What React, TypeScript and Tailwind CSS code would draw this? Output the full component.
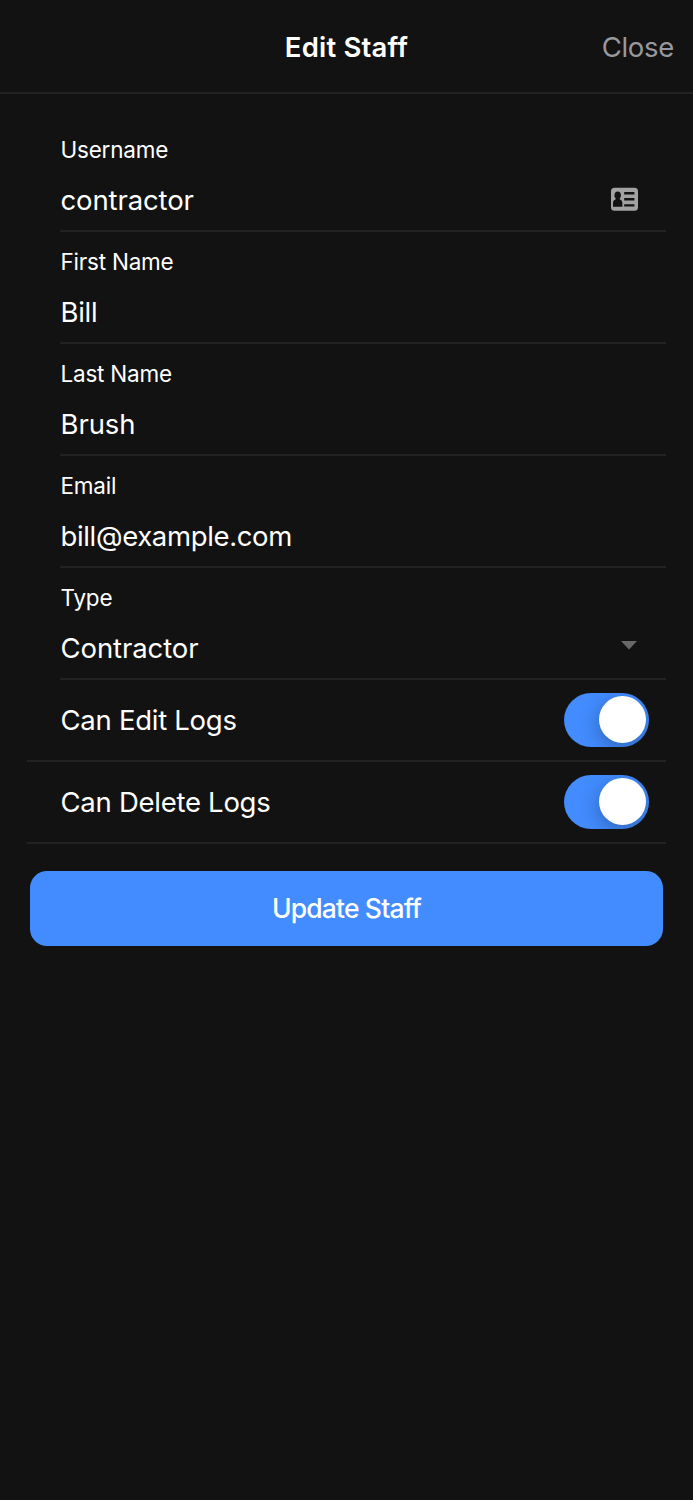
import React from "react";

const fields = [
  { label: "Username", value: "contractor", icon: "card", tracking: "tracking-[-0.12px]" },
  { label: "First Name", value: "Bill", tracking: "tracking-[-0.3px]" },
  { label: "Last Name", value: "Brush", tracking: "tracking-[-0.1px]" },
  { label: "Email", value: "bill@example.com", tracking: "tracking-[-0.35px]" },
  { label: "Type", value: "Contractor", icon: "caret", tracking: "tracking-[-0.1px]" },
];

function CardIcon() {
  return (
    <svg width="28" height="24" viewBox="0 0 28 24" className="mr-[27px] mb-[19px]">
      <rect x="0" y="0.700" width="27" height="23" rx="3.5" fill="#a2a2a2" />
      <ellipse cx="6.700" cy="8.300" rx="3.200" ry="3.800" fill="#121212" />
      <path d="M4.700 10h4v2.300c1.900.8 2.700 2.100 2.700 4v3.400H2v-3.400c0-1.900.8-3.200 2.700-4z" fill="#121212" />
      <path d="M13.200 5h10.200v2.400H13.200zM13.200 11h10.200v2.400H13.200zM13.200 17.200h10.200v2.400H13.200z" fill="#121212" />
    </svg>
  );
}

function Toggle() {
  return (
    <div className="mr-[17px] flex h-[53.5px] w-[85px] items-start justify-end overflow-hidden rounded-full bg-[#428cff] pt-[3px] pr-[3px]">
      <div className="size-[47px] rounded-full bg-white shadow-[0_5px_20px_rgba(0,0,0,0.3)]" />
    </div>
  );
}

export default function App() {
  return (
    <div className="min-h-[1500px] w-[693px] bg-[#121212] font-['Inter',sans-serif] text-white">
      <header className="grid h-[94px] grid-cols-[1fr_auto_1fr] items-center border-b-2 border-[#222222] px-[19px] pt-[3px] text-[27.5px]">
        <span />
        <h1 className="text-[27.5px] font-semibold tracking-[0.2px]">Edit Staff</h1>
        <button className="justify-self-end tracking-[-0.3px] text-[#98989f]">Close</button>
      </header>
      <main className="pt-[26px]">
        {fields.map((f) => (
          <div key={f.label} className="mr-[27px] ml-[60px] flex h-[112px] items-end justify-between border-b-2 border-[#222222]">
            <div className="self-start pt-[14px] pl-[0.5px]">
              <div className="text-[22.5px] leading-8 tracking-[-0.22px]">{f.label}</div>
              <div className={`mt-[16px] text-[27.5px] leading-9 ${f.tracking}`}>{f.value}</div>
            </div>
            {f.icon === "card" && <CardIcon />}
            {f.icon === "caret" && (
              <svg width="16" height="9" viewBox="0 0 16 9" className="mr-[29px] mb-[28px]">
                <path d="M0 0h16L8 8.500z" fill="#686868" />
              </svg>
            )}
          </div>
        ))}
        {["Can Edit Logs", "Can Delete Logs"].map((t) => (
          <div key={t} className="mx-[27px] flex h-[82px] items-center justify-between border-b-2 border-[#222222] pl-[33.5px] text-[27.5px] tracking-[-0.27px]">
            <span className="pt-[2px]">{t}</span>
            <Toggle />
          </div>
        ))}
        <button className="mx-[30px] mt-[26.5px] h-[75px] w-[633px] rounded-[17px] bg-[#428cff] pt-[2px] text-[26.5px] font-medium tracking-[-0.85px]">Update Staff</button>
      </main>
    </div>
  );
}
